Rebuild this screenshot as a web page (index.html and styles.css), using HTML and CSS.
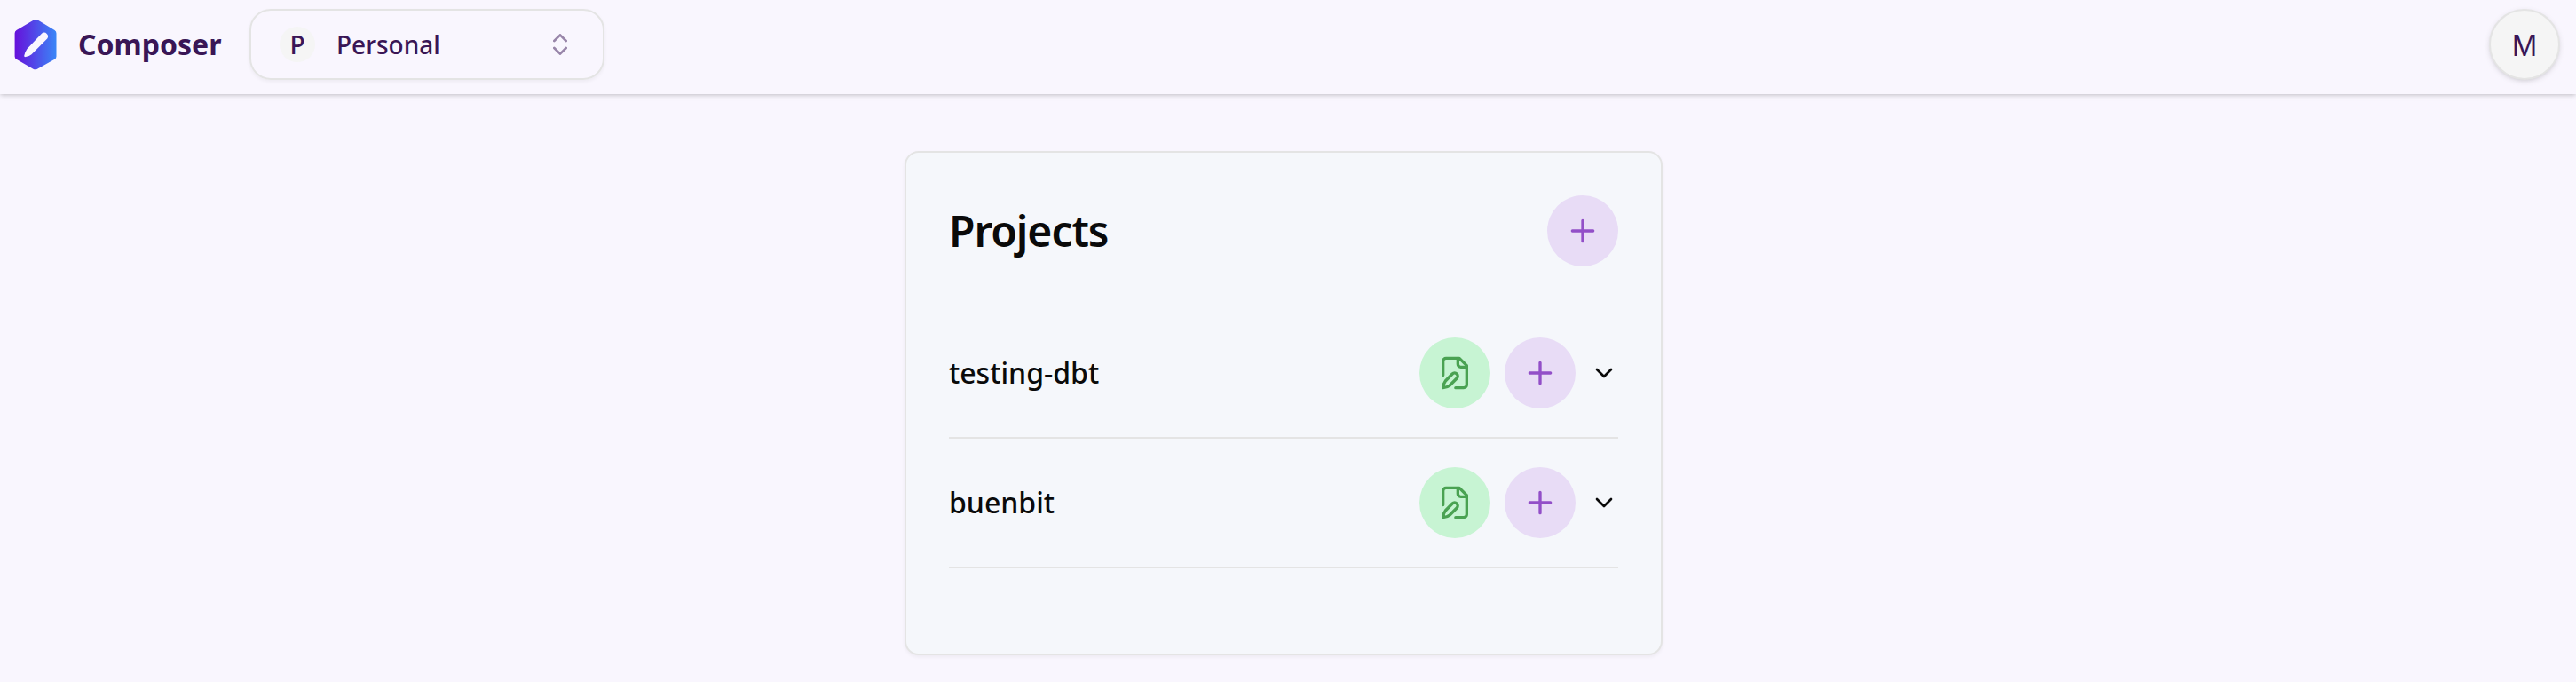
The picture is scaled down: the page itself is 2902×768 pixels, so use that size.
FILE: index.html
```html
<!DOCTYPE html>
<html lang="en">
  <head>
    <meta charset="UTF-8">
    <meta name="viewport" content="width=device-width, initial-scale=1.0">
    <title>Composer</title>
    <link rel="stylesheet" href="styles.css">
  </head>
  <body>
    <header class="topbar">
      <div class="brand">
        <svg class="logo" viewBox="0 0 48 58" aria-hidden="true">
          <defs>
            <linearGradient id="logo-fill" x1="0" y1="0" x2="1" y2="0">
              <stop offset="0" stop-color="#6610db"/>
              <stop offset="1" stop-color="#3a86f7"/>
            </linearGradient>
          </defs>
          <path fill="url(#logo-fill)" d="M22 1.600q2.300-1.400 4.600 0L45.600 13q1.900 1.200 1.900 3.400v26q0 2.200-1.900 3.400L26 56.700q-2.300 1.300-4.600 0L2.500 45.800q-1.900-1.200-1.900-3.400v-26q0-2.200 1.900-3.400z"/>
          <path fill="#f9f6fe" d="M31.200 16.500a4.300 4.300 0 0 1 6 6L19.500 40.300q-2.500 2-6.500 2.800c-1.200.2-2-.6-1.700-1.600q1-4.200 3.200-7.500z"/>
        </svg>
        <span class="brand-name">Composer</span>
      </div>
      <button class="workspace">
        <span class="workspace-initial">P</span>
        <span class="workspace-name">Personal</span>
        <svg class="icon icon-sm sort" viewBox="0 0 24 24" aria-hidden="true">
          <path d="m7 15 5 5 5-5M7 9l5-5 5 5"/>
        </svg>
      </button>
      <button class="avatar">M</button>
    </header>

    <main>
      <section class="card">
        <div class="card-header">
          <h1>Projects</h1>
          <button class="round add" aria-label="New project">
            <svg class="icon" viewBox="0 0 24 24"><path d="M5 12h14M12 5v14"/></svg>
          </button>
        </div>
        <ul class="projects">
          <li class="project">
            <span class="project-name">testing-dbt</span>
            <button class="round edit" aria-label="Edit">
              <svg class="icon" viewBox="0 0 24 24">
                <path d="M12.500 22H18a2 2 0 0 0 2-2V7l-5-5H6a2 2 0 0 0-2 2v9.500"/>
                <path d="M14 2v4a2 2 0 0 0 2 2h4"/>
                <path d="M10.300 12.600a1.950 1.950 0 1 1 3 3L8.500 20.400Q7 21.700 4 22q.200-2.800 1.600-4.600z"/>
              </svg>
            </button>
            <button class="round add" aria-label="Add">
              <svg class="icon" viewBox="0 0 24 24"><path d="M5 12h14M12 5v14"/></svg>
            </button>
            <svg class="icon icon-sm" viewBox="0 0 24 24" aria-hidden="true"><path d="m6 9 6 6 6-6"/></svg>
          </li>
          <li class="project">
            <span class="project-name">buenbit</span>
            <button class="round edit" aria-label="Edit">
              <svg class="icon" viewBox="0 0 24 24">
                <path d="M12.500 22H18a2 2 0 0 0 2-2V7l-5-5H6a2 2 0 0 0-2 2v9.500"/>
                <path d="M14 2v4a2 2 0 0 0 2 2h4"/>
                <path d="M10.300 12.600a1.950 1.950 0 1 1 3 3L8.500 20.400Q7 21.700 4 22q.200-2.800 1.600-4.600z"/>
              </svg>
            </button>
            <button class="round add" aria-label="Add">
              <svg class="icon" viewBox="0 0 24 24"><path d="M5 12h14M12 5v14"/></svg>
            </button>
            <svg class="icon icon-sm" viewBox="0 0 24 24" aria-hidden="true"><path d="m6 9 6 6 6-6"/></svg>
          </li>
        </ul>
      </section>
    </main>
  </body>
</html>
```

FILE: styles.css
```css
*,
*::after,
*::before {
  box-sizing: border-box;
}

:root {
  --bg: #f9f6fe;
  --border: #e4e4e4;
  --purple-text: #3a1656;
}

body {
  margin: 0;
  min-height: 100vh;
  background: var(--bg);
  color: #0a0a0a;
  font-family: "Noto Sans", sans-serif;
}

button {
  margin: 0;
  padding: 0;
  border: 0;
  font: inherit;
  color: inherit;
  background: none;
}

.topbar {
  display: flex;
  align-items: center;
  height: 106px;
  padding: 10px 18px 16px 16px;
  color: var(--purple-text);
  box-shadow: 0 2px 6px rgb(0 0 0 / 0.1), 0 2px 4px -1px rgb(0 0 0 / 0.12);
}

.brand {
  display: flex;
  align-items: center;
  gap: 24px;
  width: 265px;
}

.logo {
  width: 48px;
  height: 58px;
}

.brand-name {
  font-size: 32px;
  font-weight: 700;
  line-height: 48px;
}

.workspace {
  display: flex;
  align-items: center;
  width: 400px;
  height: 80px;
  padding: 0 32px;
  border: 2px solid var(--border);
  border-radius: 24px;
  font-size: 28px;
  font-weight: 500;
  box-shadow: 0 2px 4px rgb(0 0 0 / 0.05);
}

.workspace-initial {
  width: 40px;
  height: 40px;
  margin-right: 24px;
  border-radius: 50%;
  background: #f5f5f5;
  line-height: 40px;
  text-align: center;
}

.sort {
  margin-left: auto;
  opacity: 0.5;
}

.avatar {
  width: 80px;
  height: 80px;
  margin-left: auto;
  border: 2px solid var(--border);
  border-radius: 50%;
  background: #f5f5f5;
  font-size: 32px;
  box-shadow: 0 2px 6px rgb(0 0 0 / 0.1), 0 2px 4px -2px rgb(0 0 0 / 0.1);
}

.icon {
  display: block;
  flex: none;
  width: 40px;
  height: 40px;
  fill: none;
  stroke: currentcolor;
  stroke-width: 2;
  stroke-linecap: round;
  stroke-linejoin: round;
}

.icon-sm {
  width: 32px;
  height: 32px;
}

main {
  display: flex;
  justify-content: center;
  padding: 64px 10px 0 0;
}

.card {
  width: 854px;
  padding: 48px 48px 96px;
  border: 2px solid var(--border);
  border-radius: 16px;
  background: #f5f7fb;
  box-shadow: 0 2px 4px rgb(0 0 0 / 0.05);
}

.card-header {
  display: flex;
  align-items: center;
  justify-content: space-between;
  margin-bottom: 48px;
}

h1 {
  margin: 0;
  font-size: 48px;
  font-weight: 600;
  line-height: 48px;
  letter-spacing: -0.022em;
}

.round {
  display: grid;
  place-items: center;
  flex: none;
  width: 80px;
  height: 80px;
  border-radius: 50%;
}

.add {
  background: #e8dcf6;
  color: #924fc8;
}

.edit {
  background: #c7f4d3;
  color: #4aa252;
}

.projects {
  margin: 0;
  padding: 0;
  list-style: none;
}

.project {
  display: flex;
  align-items: center;
  gap: 16px;
  padding: 32px 0;
  border-bottom: 2px solid var(--border);
}

.project-name {
  margin-right: auto;
  font-size: 32px;
  font-weight: 500;
  line-height: 48px;
}
```
